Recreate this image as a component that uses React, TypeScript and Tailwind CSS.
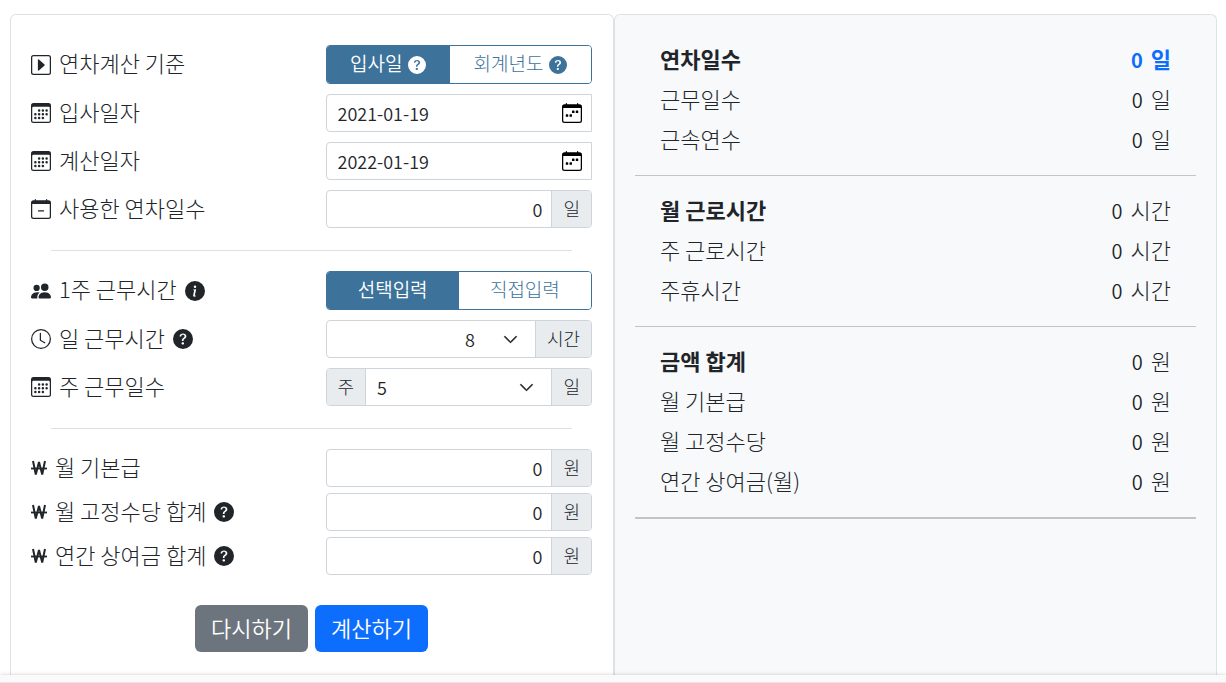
import { useState } from 'react';
import type { ReactNode } from 'react';
import {
  BsCalendar3,
  BsCalendarMinus,
  BsCalendarWeek,
  BsCaretRightSquare,
  BsChevronDown,
  BsClock,
  BsInfoCircleFill,
  BsPeopleFill,
  BsQuestionCircleFill,
} from 'react-icons/bs';

function WonIcon() {
  return (
    <svg width="16" height="20" viewBox="0 0 16 20" fill="none" stroke="currentColor" aria-hidden="true">
      <path d="M2 3 4.8 16.5 8 4 11.2 16.5 14 3" strokeWidth="2" strokeLinejoin="bevel" />
      <path d="M0 10.5h16" strokeWidth="1.8" />
    </svg>
  );
}

function Row({ icon, label, htmlFor, help, children }: {
  icon: ReactNode;
  label: string;
  htmlFor?: string;
  help?: ReactNode;
  children: ReactNode;
}) {
  return (
    <div className="grid grid-cols-[21fr_19fr] items-center">
      <div className="flex items-center gap-2 whitespace-nowrap text-[22px] leading-8">
        <span className="shrink-0">{icon}</span>
        <label htmlFor={htmlFor} className="pb-[5px]">{label}</label>
        {help}
      </div>
      {children}
    </div>
  );
}

function HelpButton({ label, info }: { label: string; info?: boolean }) {
  return (
    <button type="button" aria-label={label} className="shrink-0">
      {info ? <BsInfoCircleFill size={20} /> : <BsQuestionCircleFill size={20} />}
    </button>
  );
}

function Toggle({ label, options, help, columns }: { label: string; options: string[]; help?: boolean; columns: string }) {
  const [selected, setSelected] = useState(0);

  return (
    <div
      role="group"
      aria-label={label}
      className={`grid h-[39px] overflow-hidden rounded border border-[#3d729b] text-[19px] leading-7 ${columns}`}
    >
      {options.map((option, index) => (
        <button
          key={option}
          type="button"
          aria-pressed={index === selected}
          onClick={() => setSelected(index)}
          className={`flex items-center justify-center gap-1.5 whitespace-nowrap ${
            index === selected ? 'bg-[#3d729b] font-[350] text-white' : 'bg-white text-[#3d729b]'
          }`}
        >
          <span className="pb-[3px]">{option}</span>
          {help ? <BsQuestionCircleFill size={18} /> : null}
        </button>
      ))}
    </div>
  );
}

function Unit({ children, leading }: { children: string; leading?: boolean }) {
  return (
    <span className={`flex shrink-0 items-center border-[#ced4da] bg-[#e9ecef] px-[11px] pb-[3px] text-[18px] leading-7 ${leading ? 'border-r' : 'border-l'}`}>
      {children}
    </span>
  );
}

const fieldBox = 'flex h-[38px] overflow-hidden rounded border border-[#ced4da] bg-white';

function DateField({ id, value }: { id: string; value: string }) {
  return (
    <div className="flex h-[38px] items-center rounded-l border border-[#ced4da] bg-white pl-[11px] pr-[9px]">
      <input id={id} type="text" defaultValue={value} className="min-w-0 flex-1 text-[18px] font-[350] outline-none" />
      <button type="button" aria-label="날짜 선택" className="text-black">
        <BsCalendarWeek size={20} />
      </button>
    </div>
  );
}

function NumberField({ id, unit }: { id: string; unit: string }) {
  return (
    <div className={fieldBox}>
      <input
        id={id}
        type="text"
        inputMode="numeric"
        defaultValue="0"
        className="min-w-0 flex-1 px-[9px] text-right text-[18px] font-[350] outline-none"
      />
      <Unit>{unit}</Unit>
    </div>
  );
}

function SelectField({ id, value, options, prefix, unit, alignRight }: {
  id: string;
  value: string;
  options: string[];
  prefix?: string;
  unit: string;
  alignRight?: boolean;
}) {
  return (
    <div className={fieldBox}>
      {prefix ? <Unit leading>{prefix}</Unit> : null}
      <div className="relative min-w-0 flex-1">
        <select
          id={id}
          defaultValue={value}
          className={`h-full w-full appearance-none text-[18px] font-[350] outline-none ${alignRight ? 'pl-3 pr-[60px] [text-align-last:right]' : 'pl-[11px] pr-10'}`}
        >
          {options.map((option) => (
            <option key={option}>{option}</option>
          ))}
        </select>
        <BsChevronDown size={15} strokeWidth={0.8} className="pointer-events-none absolute right-[17px] top-[11px]" />
      </div>
      <Unit>{unit}</Unit>
    </div>
  );
}

const hours = ['1', '2', '3', '4', '5', '6', '7', '8'];
const days = ['1', '2', '3', '4', '5', '6', '7'];

interface ResultItem {
  label: string;
  unit: string;
  bold?: boolean;
  highlight?: boolean;
}

const results: ResultItem[][] = [
  [
    { label: '연차일수', unit: '일', bold: true, highlight: true },
    { label: '근무일수', unit: '일' },
    { label: '근속연수', unit: '일' },
  ],
  [
    { label: '월 근로시간', unit: '시간', bold: true },
    { label: '주 근로시간', unit: '시간' },
    { label: '주휴시간', unit: '시간' },
  ],
  [
    { label: '금액 합계', unit: '원', bold: true },
    { label: '월 기본급', unit: '원' },
    { label: '월 고정수당', unit: '원' },
    { label: '연간 상여금(월)', unit: '원' },
  ],
];

function Results() {
  return (
    <section className="flex-1 rounded-t-md border border-b-0 border-[#dee2e6] bg-[#f8f9fb] px-5 pt-[23px]">
      {results.map((group, index) => (
        <dl
          key={group[0].label}
          className={`mb-[13px] px-[25px] pb-[17px] text-[22px] leading-10 ${
            index === results.length - 1 ? 'border-b-2 border-[#c3c4c6]' : 'border-b border-[#c3c4c6]'
          }`}
        >
          {group.map((item) => (
            <div key={item.label} className="flex h-10 justify-between">
              <dt className={item.bold ? 'font-bold' : ''}>{item.label}</dt>
              <dd className={`flex items-baseline gap-2 ${item.highlight ? 'font-bold text-[#0d6efd]' : ''}`}>
                <span className={`text-xl leading-10 ${item.highlight ? '' : 'font-[350]'}`}>0</span>
                {item.unit}
              </dd>
            </div>
          ))}
        </dl>
      ))}
    </section>
  );
}

export default function App() {
  return (
    <div className="flex h-screen flex-col overflow-hidden bg-white font-['Noto_Sans_CJK_KR',sans-serif] font-light text-[#212529]">
      <main className="flex min-h-0 flex-1 overflow-hidden pl-[10px] pr-[9px] pt-[14px]">
        <form className="flex-1 rounded-t-md border border-b-0 border-[#dee2e6] pl-5 pr-[21px] pt-[30px]" onSubmit={(e) => e.preventDefault()}>
          <div className="space-y-[10px]">
            <Row icon={<BsCaretRightSquare size={20} />} label="연차계산 기준">
              <Toggle label="연차계산 기준" options={['입사일', '회계년도']} help columns="grid-cols-[7fr_8fr]" />
            </Row>
            <Row icon={<BsCalendar3 size={20} />} label="입사일자" htmlFor="join">
              <DateField id="join" value="2021-01-19" />
            </Row>
            <Row icon={<BsCalendar3 size={20} />} label="계산일자" htmlFor="calc">
              <DateField id="calc" value="2022-01-19" />
            </Row>
            <Row icon={<BsCalendarMinus size={20} />} label="사용한 연차일수" htmlFor="used">
              <NumberField id="used" unit="일" />
            </Row>
          </div>

          <hr className="mx-5 mb-5 mt-[22px] border-[#dfe0e1]" />

          <div className="space-y-[10px]">
            <Row icon={<BsPeopleFill size={20} />} label="1주 근무시간" help={<HelpButton label="1주 근무시간 안내" info />}>
              <Toggle label="1주 근무시간" options={['선택입력', '직접입력']} columns="grid-cols-2" />
            </Row>
            <Row icon={<BsClock size={20} />} label="일 근무시간" htmlFor="hours" help={<HelpButton label="일 근무시간 도움말" />}>
              <SelectField id="hours" value="8" options={hours} unit="시간" alignRight />
            </Row>
            <Row icon={<BsCalendar3 size={20} />} label="주 근무일수" htmlFor="days">
              <SelectField id="days" value="5" options={days} prefix="주" unit="일" />
            </Row>
          </div>

          <hr className="mx-5 mb-5 mt-[22px] border-[#dfe0e1]" />

          <div className="space-y-[6px]">
            <Row icon={<WonIcon />} label="월 기본급" htmlFor="base">
              <NumberField id="base" unit="원" />
            </Row>
            <Row icon={<WonIcon />} label="월 고정수당 합계" htmlFor="allowance" help={<HelpButton label="월 고정수당 도움말" />}>
              <NumberField id="allowance" unit="원" />
            </Row>
            <Row icon={<WonIcon />} label="연간 상여금 합계" htmlFor="bonus" help={<HelpButton label="연간 상여금 도움말" />}>
              <NumberField id="bonus" unit="원" />
            </Row>
          </div>

          <div className="mt-[30px] flex justify-center gap-[7px] text-[22px] font-[350] leading-[30px] text-white">
            <button type="reset" className="rounded-md bg-[#6c757d] px-4 pb-[10px] pt-[7px]">다시하기</button>
            <button type="submit" className="rounded-md bg-[#0d6efd] px-4 pb-[10px] pt-[7px]">계산하기</button>
          </div>
        </form>

        <Results />
      </main>

      <footer className="z-10 h-2 shrink-0 border-b border-[#e6e6e6] bg-[#fafafa] shadow-[0_0_4px_rgba(0,0,0,0.2)]" />
    </div>
  );
}
